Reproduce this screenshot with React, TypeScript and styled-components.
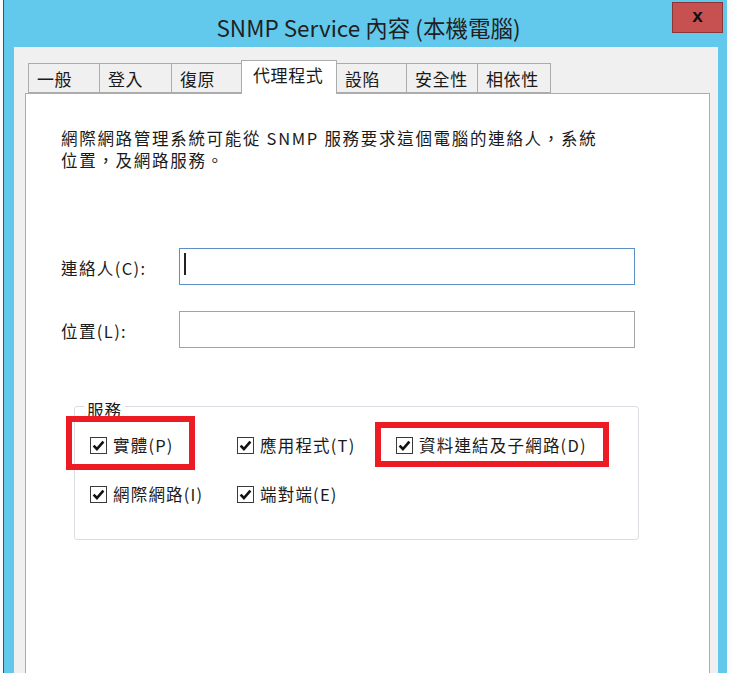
import React from 'react';
import styled, { createGlobalStyle } from 'styled-components';

const GlobalStyle = createGlobalStyle`
  html, body {
    margin: 0;
    padding: 0;
    background: #ffffff;
  }
  * {
    box-sizing: border-box;
  }
`;

const FONT = `"Noto Sans CJK TC", "Noto Sans", sans-serif`;

const Page = styled.div`
  width: 731px;
  height: 673px;
  overflow: hidden;
  background: #fbfbfb;
  font-family: ${FONT};
  color: #1a1a1a;
`;

const Frame = styled.div`
  margin-left: 3px;
  width: 724px;
  height: 673px;
  display: flex;
  flex-direction: column;
  background: #62c9ec;
  border-left: 1px solid #4d4d4d;
`;

const TitleBar = styled.div`
  height: 47px;
  flex-shrink: 0;
  display: grid;
  grid-template-columns: 1fr auto 1fr;
  align-items: start;
`;

const Title = styled.div`
  grid-column: 2;
  margin: 12px 0 0 6px;
  font-size: 22.5px;
  line-height: 30px;
  color: #1f1f1f;
  white-space: nowrap;
`;

const CloseButton = styled.div`
  grid-column: 3;
  justify-self: end;
  margin: 2px 4px 0 0;
  width: 51px;
  height: 31px;
  display: flex;
  align-items: center;
  justify-content: center;
  background: #c75050;
  border: 1px solid #8a3636;
  font-family: "Liberation Sans", sans-serif;
  font-weight: 700;
  font-size: 19px;
  color: #111;
  padding-bottom: 3px;
`;

const Body = styled.div`
  flex: 1;
  display: flex;
  padding: 0 9px 0 10px;
`;

const Client = styled.div`
  flex: 1;
  display: flex;
  flex-direction: column;
  background: #f0f0f0;
  padding: 13px 8px 0 11px;
`;

const TabStrip = styled.div`
  height: 33px;
  display: flex;
  align-items: flex-end;
  padding-left: 3px;
  position: relative;
  z-index: 1;
`;

const Tab = styled.div<{ $w: number; $active?: boolean }>`
  width: ${p => p.$w}px;
  height: ${p => (p.$active ? 34 : 30)}px;
  margin-bottom: ${p => (p.$active ? -1 : 0)}px;
  margin-right: -1px;
  padding: ${p => (p.$active ? '2px 0 0 11px' : '3px 0 0 8px')};
  background: ${p => (p.$active ? '#ffffff' : '#f0f0f0')};
  border: 1px solid #acacac;
  border-bottom: ${p => (p.$active ? 'none' : '1px solid #acacac')};
  font-size: 17px;
  line-height: 24px;
  letter-spacing: 0.6px;
  color: #1a1a1a;
  white-space: nowrap;
  position: relative;
  z-index: ${p => (p.$active ? 2 : 1)};
`;

const Panel = styled.div`
  flex: 1;
  background: #ffffff;
  border: 1px solid #acacac;
  border-bottom: none;
  padding: 33px 0 0 35px;
`;

const Description = styled.p`
  margin: 0;
  font-size: 16.5px;
  line-height: 22px;
  letter-spacing: 1.7px;
  white-space: nowrap;
`;

const FieldGrid = styled.div`
  margin-top: 77px;
  display: grid;
  grid-template-columns: 118px 456px;
  row-gap: 26px;
  align-items: center;
`;

const FieldLabel = styled.div`
  font-size: 16.5px;
  letter-spacing: 1.4px;
  padding-top: 3px;
`;

const TextBox = styled.div<{ $focused?: boolean }>`
  height: 37px;
  background: #ffffff;
  border: 1px solid ${p => (p.$focused ? '#5b8fc6' : '#a3a3a3')};
  padding: 4px 0 0 4px;
`;

const Caret = styled.div`
  width: 2px;
  height: 22px;
  background: #222;
`;

const GroupBox = styled.fieldset`
  margin: 45px 0 0 13px;
  width: 565px;
  min-width: 0;
  border: 1px solid #d9dde2;
  border-radius: 3px;
  padding: 14px 0 33px 15px;
`;

const Legend = styled.legend`
  margin-left: -6px;
  padding: 8px 3px 0;
  font-size: 16.5px;
  line-height: 18px;
  letter-spacing: 1px;
  color: #1a1a1a;
`;

const CheckGrid = styled.div`
  display: grid;
  grid-template-columns: 147px 159px auto;
  row-gap: 25px;
`;

const CheckItem = styled.label`
  position: relative;
  display: flex;
  align-items: center;
  gap: 6px;
  height: 24px;
  font-size: 16.5px;
  letter-spacing: 1.2px;
  white-space: nowrap;
`;

const Highlight = styled.div<{ $left: number; $top: number; $w: number; $h: number }>`
  position: absolute;
  left: ${p => p.$left}px;
  top: ${p => p.$top}px;
  width: ${p => p.$w}px;
  height: ${p => p.$h}px;
  border: 6px solid #ed1c24;
  pointer-events: none;
`;

function CheckMark() {
  return (
    <svg width="17" height="17" viewBox="0 0 17 17">
      <rect x="0.5" y="0.5" width="16" height="16" fill="#ffffff" stroke="#3a3a3a" />
      <path d="M3.6 8.6 L6.9 12 L13.4 4.6" fill="none" stroke="#111" strokeWidth="2.6" />
    </svg>
  );
}

type Mark = { left: number; top: number; w: number; h: number };

const tabs = [
  { label: '一般', w: 72 },
  { label: '登入', w: 73 },
  { label: '復原', w: 71 },
  { label: '代理程式', w: 96, active: true },
  { label: '設陷', w: 71 },
  { label: '安全性', w: 72 },
  { label: '相依性', w: 74 },
];

const services: { label: string; mark?: Mark }[] = [
  { label: '實體(P)', mark: { left: -24, top: -17, w: 129, h: 54 } },
  { label: '應用程式(T)' },
  { label: '資料連結及子網路(D)', mark: { left: -21, top: -11, w: 234, h: 45 } },
  { label: '網際網路(I)' },
  { label: '端對端(E)' },
];

export default function App() {
  return (
    <Page>
      <GlobalStyle />
      <Frame>
        <TitleBar>
          <Title>SNMP Service 內容 (本機電腦)</Title>
          <CloseButton>x</CloseButton>
        </TitleBar>
        <Body>
          <Client>
            <TabStrip>
              {tabs.map(t => (
                <Tab key={t.label} $w={t.w} $active={t.active}>
                  {t.label}
                </Tab>
              ))}
            </TabStrip>
            <Panel>
              <Description>
                網際網路管理系統可能從 SNMP 服務要求這個電腦的連絡人，系統
                <br />
                位置，及網路服務。
              </Description>
              <FieldGrid>
                <FieldLabel>連絡人(C):</FieldLabel>
                <TextBox $focused>
                  <Caret />
                </TextBox>
                <FieldLabel>位置(L):</FieldLabel>
                <TextBox />
              </FieldGrid>
              <GroupBox>
                <Legend>服務</Legend>
                <CheckGrid>
                  {services.map(s => (
                    <CheckItem key={s.label}>
                      <CheckMark />
                      {s.label}
                      {s.mark && (
                        <Highlight $left={s.mark.left} $top={s.mark.top} $w={s.mark.w} $h={s.mark.h} />
                      )}
                    </CheckItem>
                  ))}
                </CheckGrid>
              </GroupBox>
            </Panel>
          </Client>
        </Body>
      </Frame>
    </Page>
  );
}
